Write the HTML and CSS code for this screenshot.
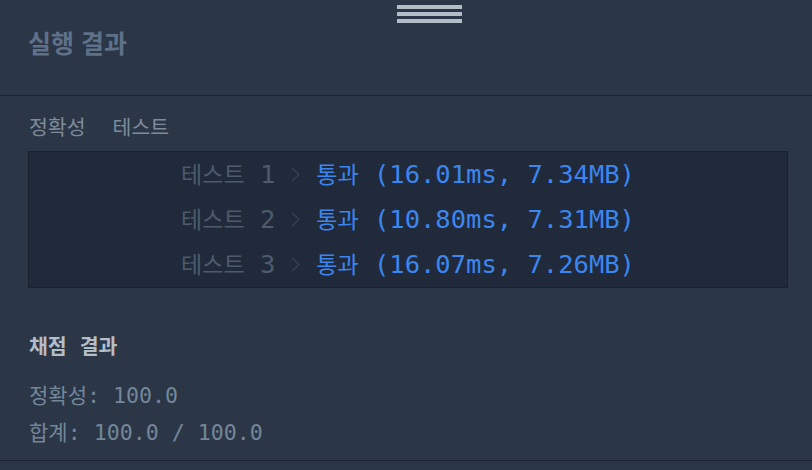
FILE: index.html
```html
<!DOCTYPE html>
<html lang="ko">
<head>
<meta charset="utf-8">
<link rel="stylesheet" href="styles.css">
</head>
<body>
<div class="panel">
  <header class="head">
    <div class="handle"><span></span><span></span><span></span></div>
    <h1 class="title">실행 결과</h1>
  </header>
  <section class="result">
    <div class="tabs"><span class="tab">정확성</span><span class="tab">테스트</span></div>
    <div class="box">
      <div class="row"><span class="label"><span class="ko">테스트</span> 1</span><svg class="chev" viewBox="0 0 9 15" width="9" height="15"><path d="M1 1 L8 7.5 L1 14" fill="none" stroke="#374353" stroke-width="1.3"/></svg><span class="pass"><span class="ko">통과</span> (16.01ms, 7.34MB)</span></div>
      <div class="row"><span class="label"><span class="ko">테스트</span> 2</span><svg class="chev" viewBox="0 0 9 15" width="9" height="15"><path d="M1 1 L8 7.5 L1 14" fill="none" stroke="#374353" stroke-width="1.3"/></svg><span class="pass"><span class="ko">통과</span> (10.80ms, 7.31MB)</span></div>
      <div class="row"><span class="label"><span class="ko">테스트</span> 3</span><svg class="chev" viewBox="0 0 9 15" width="9" height="15"><path d="M1 1 L8 7.5 L1 14" fill="none" stroke="#374353" stroke-width="1.3"/></svg><span class="pass"><span class="ko">통과</span> (16.07ms, 7.26MB)</span></div>
    </div>
    <h2 class="score-title"><span class="ko-t">채점</span> <span class="ko-t">결과</span></h2>
    <p class="score first"><span class="ko-s">정확성</span>: 100.0</p>
    <p class="score"><span class="ko-s">합계</span>: 100.0 / 100.0</p>
  </section>
</div>
</body>
</html>
```

FILE: styles.css
```css
html, body {
  margin: 0;
  padding: 0;
  background: #2b3647;
}
body {
  width: 812px;
  height: 470px;
  overflow: hidden;
  font-family: "Noto Sans CJK KR", sans-serif;
}
.panel {
  display: flex;
  flex-direction: column;
}
.head {
  height: 96px;
  box-sizing: border-box;
  border-bottom: 1px solid #1c2433;
  display: flex;
  flex-direction: column;
}
.handle {
  display: flex;
  flex-direction: column;
  gap: 3px;
  align-self: center;
  margin-top: 5px;
  margin-left: 47px;
}
.handle span {
  display: block;
  width: 65px;
  height: 4px;
  background: #b4bec6;
}
.title {
  margin: 3px 0 0 28px;
  font-size: 25px;
  font-weight: 700;
  line-height: 32px;
  color: #5f7189;
}
.result {
  padding: 0 24px 0 28px;
  height: 365px;
  border-bottom: 1px solid #1c2433;
  box-sizing: border-box;
}
.tabs {
  display: flex;
  gap: 27px;
  margin-top: 17px;
  padding-left: 1px;
  height: 38px;
  align-items: flex-start;
}
.tab {
  font-size: 20.5px;
  line-height: 26px;
  color: #7d8c9b;
}
.box {
  background: #202a3a;
  border: 1px solid #19212d;
  display: flex;
  flex-direction: column;
}
.row {
  height: 45px;
  display: flex;
  align-items: center;
  justify-content: center;
  font-family: "DejaVu Sans Mono", "Noto Sans CJK KR", monospace;
  font-size: 25.5px;
  line-height: 30px;
  padding-bottom: 2px;
  box-sizing: border-box;
}
.ko {
  font-family: "Noto Sans CJK KR", sans-serif;
  font-size: 23px;
}
.label {
  color: #4d5b6c;
}
.chev {
  margin: 2px 16px 0 16px;
}
.pass {
  color: #3c86f0;
}
.score-title {
  margin: 44px 0 0 1px;
  font-family: "DejaVu Sans Mono", "Noto Sans CJK KR", monospace;
  font-size: 21.6px;
  font-weight: 700;
  line-height: 26px;
  color: #b3bec9;
}
.ko-t {
  font-family: "Noto Sans CJK KR", sans-serif;
  font-size: 20.5px;
}
.ko-s {
  font-family: "Noto Sans CJK KR", sans-serif;
  font-size: 21px;
}
.score {
  margin: 9px 0 0 1px;
  font-family: "DejaVu Sans Mono", "Noto Sans CJK KR", monospace;
  font-size: 21.6px;
  line-height: 26px;
  color: #74879a;
}
.score.first {
  margin-top: 21px;
}
```
